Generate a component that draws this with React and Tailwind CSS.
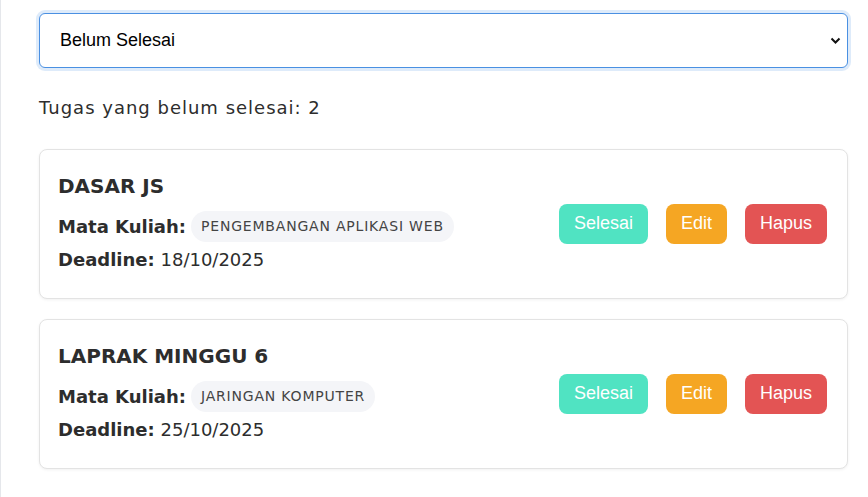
import React, { useState } from 'react';

const tasks = [
  { id: 1, title: 'DASAR JS', course: 'PENGEMBANGAN APLIKASI WEB', deadline: '18/10/2025' },
  { id: 2, title: 'LAPRAK MINGGU 6', course: 'JARINGAN KOMPUTER', deadline: '25/10/2025' },
];

function TaskCard({ task }) {
  return (
    <div className="flex items-center justify-between rounded-lg border border-[#e3e3e3] bg-white pl-[18px] pr-5 h-[150px] shadow-[0_1px_3px_rgba(0,0,0,0.06)]">
      <div className="flex flex-col -mt-[5px]">
        <h3 className="text-[20px] leading-[30px] font-semibold text-[#2d2d2d] mb-[10px]">{task.title}</h3>
        <div className="flex items-center gap-[5px] text-[18px] leading-[27px] text-[#2d2d2d]">
          <span className="font-semibold">Mata Kuliah:</span>
          <span className="rounded-full bg-[#f4f5f8] px-[10px] h-[31px] flex items-center text-[14px] text-[#444] tracking-[0.8px]">
            {task.course}
          </span>
        </div>
        <p className="mt-[4px] text-[18px] leading-[27px] text-[#2d2d2d]">
          <span className="font-semibold">Deadline:</span> {task.deadline}
        </p>
      </div>
      <div className="flex items-center gap-[18px] -mt-[1px] font-['Liberation_Sans',Arial,sans-serif] text-[18px] text-white">
        <button className="h-[40px] px-[15px] rounded-lg bg-[#50e3c2]">Selesai</button>
        <button className="h-[40px] px-[15px] rounded-lg bg-[#f5a623]">Edit</button>
        <button className="h-[40px] px-[15px] rounded-lg bg-[#e35454]">Hapus</button>
      </div>
    </div>
  );
}

export default function App() {
  const [filter, setFilter] = useState('belum');

  return (
    <div className="min-h-[497px] bg-white border-l border-[#e5e7eb] font-['DejaVu_Sans',sans-serif]">
      <div className="pl-[38px] pr-[20px] pt-[13px]">
        <div className="relative">
          <select
            value={filter}
            onChange={(e) => setFilter(e.target.value)}
            className="w-full h-[55px] appearance-none rounded-md border border-[#4a90e2] bg-white pl-5 text-[18px] text-black font-['Liberation_Sans',Arial,sans-serif] outline-none shadow-[0_0_0_3px_rgba(74,144,226,0.18)]"
          >
            <option value="semua">Semua</option>
            <option value="belum">Belum Selesai</option>
            <option value="selesai">Selesai</option>
          </select>
          <svg className="absolute right-[7px] top-[24px] pointer-events-none" width="11" height="8" viewBox="0 0 11 8">
            <path d="M1.5 1.5 L5.5 5.5 L9.5 1.5" stroke="#111" strokeWidth="2" fill="none" />
          </svg>
        </div>

        <p className="mt-[26px] mb-[28px] text-[18px] leading-[27px] text-[#2d2d2d] tracking-[1px]">Tugas yang belum selesai: 2</p>

        <div className="flex flex-col gap-5">
          {tasks.map((task) => (
            <TaskCard key={task.id} task={task} />
          ))}
        </div>
      </div>
    </div>
  );
}
